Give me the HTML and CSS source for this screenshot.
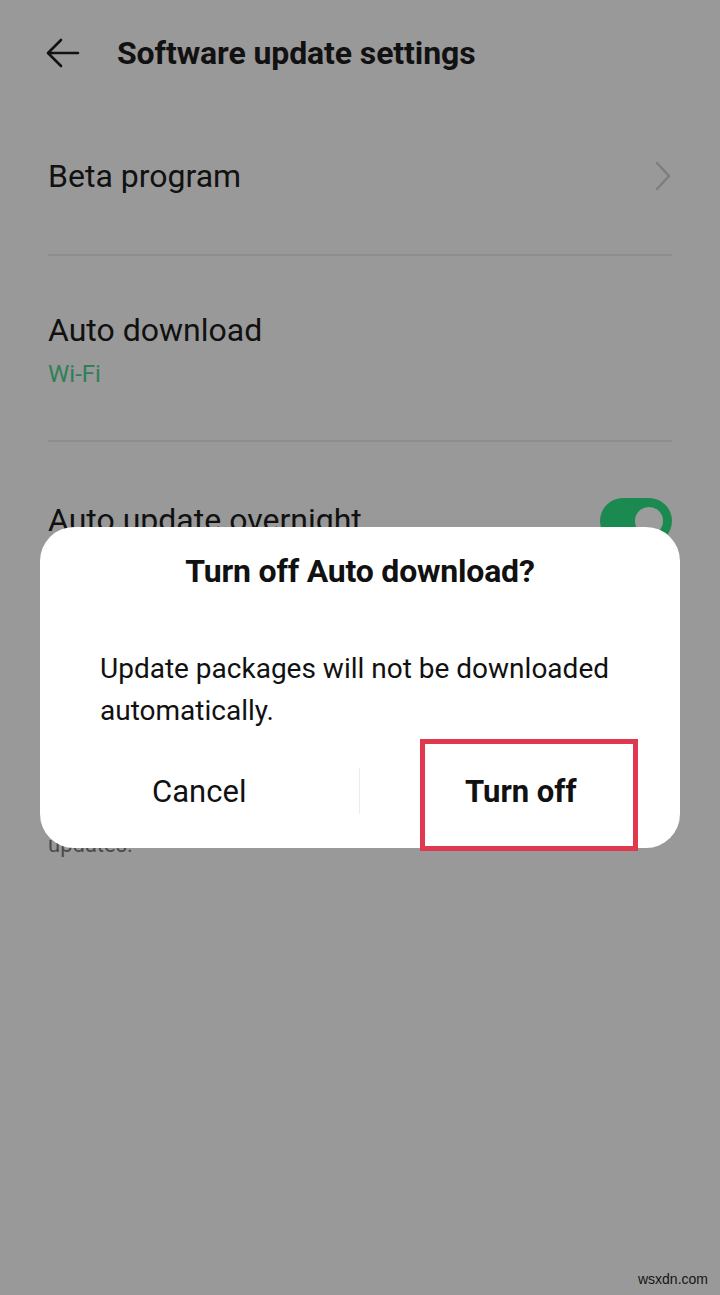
FILE: index.html
```html
<!DOCTYPE html>
<html lang="en">
<head>
    <meta charset="UTF-8">
    <meta name="viewport" content="width=device-width, initial-scale=1.0">
    <title>Software update settings</title>
    <link rel="stylesheet" href="styles.css">
</head>
<body>
    <div id="screen">
        <div class="header">
            <svg class="back" width="34" height="30" viewBox="0 0 34 30">
                <path d="M32 15H3M15 2L2 15L15 28" fill="none" stroke="#111" stroke-width="2.6" stroke-linecap="round" stroke-linejoin="round"/>
            </svg>
            <h1>Software update settings</h1>
        </div>

        <div class="list">
            <div class="row row-beta">
                <div class="label">Beta program</div>
                <svg class="chevron" width="18" height="30" viewBox="0 0 18 30">
                    <path d="M3 2L15 15L3 28" fill="none" stroke="#7c7c7c" stroke-width="2.2" stroke-linecap="round" stroke-linejoin="round"/>
                </svg>
            </div>
            <div class="row row-download">
                <div>
                    <div class="label">Auto download</div>
                    <div class="summary green">Wi-Fi</div>
                </div>
            </div>
            <div class="row row-overnight">
                <div class="label">Auto update overnight</div>
                <div class="switch"><span></span></div>
            </div>
            <!-- only the tail of the summary shows under the dialog -->
            <div class="row-note">
                <div class="summary">updates.</div>
            </div>
        </div>

        <div class="scrim">
            <div class="dialog">
                <div class="dialog-title">Turn off Auto download?</div>
                <div class="dialog-text">Update packages will not be downloaded automatically.</div>
                <div class="buttons">
                    <div class="btn">Cancel</div>
                    <div class="sep"></div>
                    <div class="btn btn-main">Turn off</div>
                </div>
                <div class="mark"></div>
            </div>
        </div>

        <div class="watermark">wsxdn.com</div>
    </div>
</body>
</html>
```

FILE: styles.css
```css
body{
    margin: 0;
    font-family: Roboto, "Noto Sans", sans-serif;
    color: #111;
}

#screen{
    position: relative;
    width: 720px;
    height: 1295px;
    background: #999999;
    overflow: hidden;
}

.header{
    height: 106px;
    display: flex;
    align-items: center;
    padding-left: 46px;
}

.header h1{
    margin: 0 0 0 37px;
    font-size: 32px;
    font-weight: 700;
    letter-spacing: -0.1px;
}

.back{
    display: block;
}

.list{
    padding: 0 48px;
}

.row{
    display: flex;
    align-items: center;
    justify-content: space-between;
    border-bottom: 2px solid #8e8e8e;
}

.label{
    font-size: 32px;
    line-height: 40px;
}

.summary{
    font-size: 22px;
    line-height: 36px;
    color: #4a4a4a;
}

.green{
    color: #2f7f57;
    font-size: 24px;
    margin-top: 6px;
}

.row-beta{
    height: 150px;
    padding-bottom: 8px;
    box-sizing: border-box;
}

.row-download{
    height: 186px;
    padding-top: 5px;
    box-sizing: border-box;
}

.row-overnight{
    height: 162px;
    align-items: flex-start;
    padding-top: 58px;
    box-sizing: border-box;
    border-bottom: none;
}

.row-note{
    padding-top: 223px;
}

.switch{
    width: 72px;
    height: 46px;
    border-radius: 23px;
    background: #1b8a50;
    position: relative;
    margin-top: -2px;
}

.switch span{
    position: absolute;
    right: 9px;
    top: 9px;
    width: 28px;
    height: 28px;
    border-radius: 50%;
    background: #9c9c9c;
}

/* dialog overlay */
.scrim{
    position: absolute;
    left: 0;
    top: 0;
    right: 0;
    padding: 527px 40px 0;
}

.dialog{
    position: relative;
    height: 321px;
    background: #fff;
    border-radius: 34px;
    box-sizing: border-box;
    padding: 24px 60px 0;
}

.dialog-title{
    text-align: center;
    font-size: 32px;
    font-weight: 700;
    line-height: 40px;
    letter-spacing: -0.2px;
}

.dialog-text{
    margin-top: 57px;
    font-size: 28px;
    line-height: 42px;
}

.buttons{
    display: flex;
    align-items: center;
    margin: 11px -60px 0;
    height: 96px;
}

.btn{
    flex: 1;
    text-align: center;
    font-size: 31px;
}

.btn-main{
    font-weight: 700;
    padding-left: 2px;
}

.sep{
    width: 1px;
    height: 46px;
    background: #ececec;
}

.mark{
    position: absolute;
    left: 380px;
    top: 212px;
    width: 208px;
    height: 102px;
    border: 5px solid #e0384e;
}

.watermark{
    position: absolute;
    right: 12px;
    bottom: 8px;
    font-family: "Liberation Sans", Arial, sans-serif;
    font-size: 14px;
    color: #151515;
}
```
